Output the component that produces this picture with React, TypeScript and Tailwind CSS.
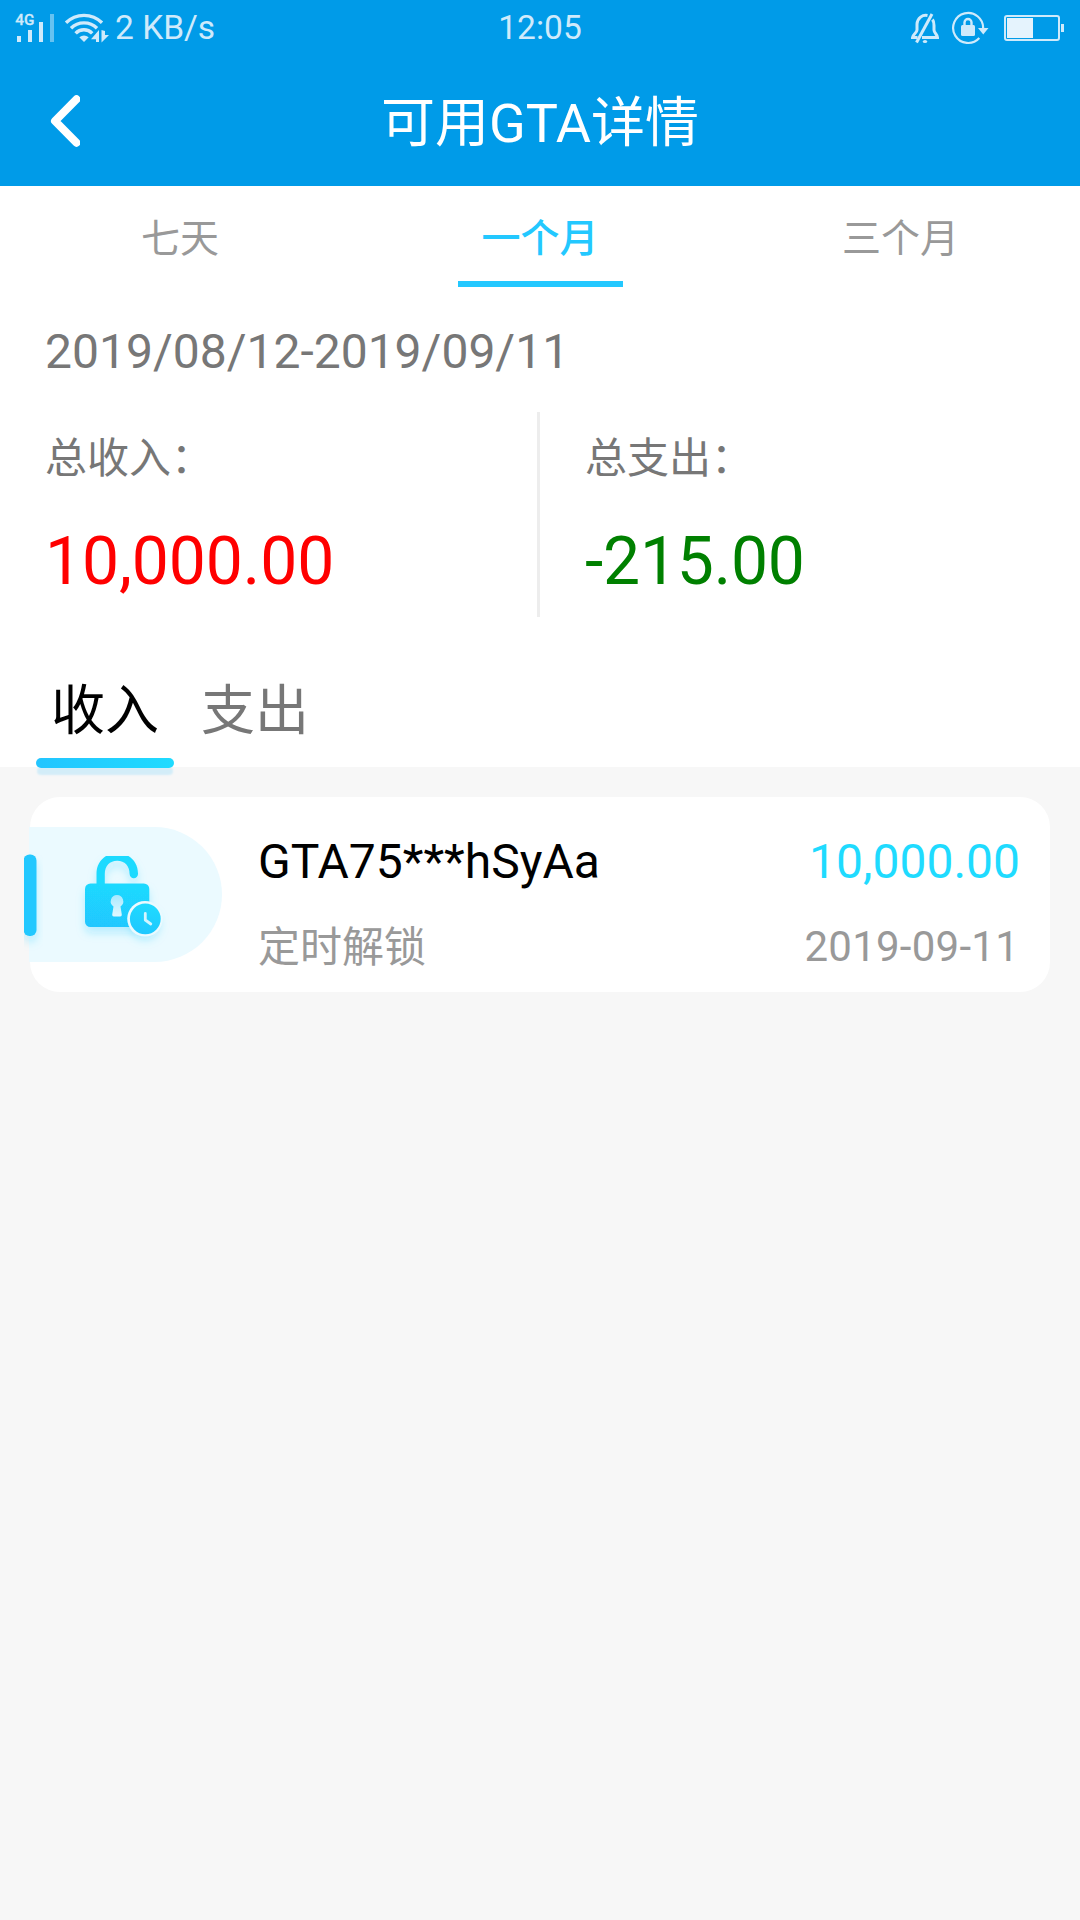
import React from "react";

function SignalIcon() {
  return (
    <svg width="43" height="42" viewBox="15 6 43 42" className="shrink-0">
      <text x="15.300" y="24" fontSize="15.300" fontWeight="500" fill="#cfeafb" stroke="#cfeafb" strokeWidth="0.300" fontFamily="Roboto, sans-serif">4G</text>
      <rect x="17" y="35" width="4" height="6" fill="#cfeafb" />
      <rect x="28" y="29" width="4" height="12" fill="#cfeafb" />
      <rect x="39" y="21" width="4" height="20" fill="#cfeafb" />
      <rect x="50" y="13" width="4" height="28" fill="#66c2f1" />
    </svg>
  );
}

function WifiIcon() {
  return (
    <svg width="46" height="42" viewBox="64 6 46 42" className="shrink-0">
      <g fill="none" stroke="#cfeafb" strokeWidth="3.4">
        <path d="M66 21.8a25.5 25.5 0 0 1 36 0" />
        <path d="M71 27.3a18.2 18.2 0 0 1 26 0" />
        <path d="M75.6 32.4a11.4 11.4 0 0 1 16.6 0" />
      </g>
      <path d="M79.3 36.2q4.7-3.6 9.4 0L84 41z" fill="#cfeafb" />
      <path d="M99 29v12h-3v-2.800h-5zM101.500 29v12.500l7.500-7.500h-4v-4z" fill="#cfeafb" />
    </svg>
  );
}

function MutedBellIcon() {
  return (
    <svg width="30" height="32" viewBox="910 11 30 32" className="shrink-0">
      <g fill="none" stroke="#cfeafb" strokeWidth="3">
        <path d="M927.5 14.5c-5-1-10 2.500-10.500 8.500v6c0 3-4.500 4.500-4.500 7.500h5" />
        <path d="M932.500 18.500c1.300 1.800 1.500 3.500 1.500 6v4.500c0 3 3.500 4.500 3.500 7.500h-15.500" />
        <path d="M932 13l-15.500 28.500" />
      </g>
      <ellipse cx="925" cy="40.500" rx="2.200" ry="1.500" fill="#cfeafb" />
    </svg>
  );
}

function RotationLockIcon() {
  return (
    <svg width="38" height="34" viewBox="951 10 38 34" className="shrink-0">
      <path d="M979.300 37a15 15 0 1 1 3.800-9" fill="none" stroke="#cfeafb" strokeWidth="2.200" />
      <path d="M978 27h10.500l-5.250 6.500z" fill="#cfeafb" />
      <rect x="961" y="24" width="14" height="11" rx="1.500" fill="#cfeafb" />
      <path d="M964.500 25v-3.500a3.500 3.500 0 0 1 7 0v3.500" fill="none" stroke="#cfeafb" strokeWidth="2.400" />
    </svg>
  );
}

function BatteryIcon() {
  return (
    <svg width="61" height="26" viewBox="0 0 61 26" className="shrink-0">
      <rect x="1" y="1" width="54" height="24" rx="2" fill="none" stroke="#cfeafb" strokeWidth="2" />
      <rect x="3" y="3" width="26" height="20" fill="#e5f3fd" />
      <rect x="57" y="9" width="3" height="8" fill="#cfeafb" />
    </svg>
  );
}

function StatusBar() {
  return (
    <div className="grid h-[54px] grid-cols-3 items-center text-[33.500px] leading-[54px] text-[#cfeafb]">
      <div className="flex items-center pl-[15px]">
        <SignalIcon />
        <div className="mr-[5px] ml-[6px] flex"><WifiIcon /></div>
        <span className="pt-px whitespace-nowrap">2 KB/s</span>
      </div>
      <div className="pt-px text-center">12:05</div>
      <div className="flex items-center justify-end pr-[15px]">
        <MutedBellIcon />
        <div className="mr-[15px] ml-[11px] flex"><RotationLockIcon /></div>
        <BatteryIcon />
      </div>
    </div>
  );
}

function UnlockIcon() {
  return (
    <svg width="198" height="135" viewBox="24 827 198 135" className="block">
      <defs>
        <linearGradient id="cyan" x1="0" y1="1" x2="0.2" y2="0">
          <stop offset="0" stopColor="#20c6ff" />
          <stop offset="1" stopColor="#1fd9ff" />
        </linearGradient>
        <linearGradient id="keyhole" x1="0" y1="0" x2="0" y2="1">
          <stop offset="0" stopColor="#a8e9ff" />
          <stop offset="1" stopColor="#e2f8ff" />
        </linearGradient>
        <filter id="glow" x="-50%" y="-50%" width="200%" height="200%">
          <feDropShadow dx="0" dy="6" stdDeviation="4" floodColor="#20c8ff" floodOpacity="0.25" />
        </filter>
      </defs>
      <path d="M29 827h125.500a67.500 67.500 0 0 1 0 135H29z" fill="#ebfaff" />
      <rect x="23.500" y="854.500" width="13" height="81.500" rx="6" fill="#20c8ff" filter="url(#glow)" />
      <g filter="url(#glow)">
        <path d="M96.500 885v-11.500c0-7.500 3.700-14 9.500-17.500h22.500c5.800 3.500 9.500 10 9.500 17.500v0.500a4.200 4.200 0 0 1-8.400 0c0-8-5-13.200-12.400-13.200s-12.400 5.200-12.400 13.200v11z" fill="#1fdaff" />
        <rect x="85" y="883.500" width="64.300" height="43.500" rx="5.500" fill="url(#cyan)" />
      </g>
      <path d="M117 895a6.300 6.300 0 0 1 3.500 11.500l1.300 8q.2 2-1.600 2h-6.400q-1.800 0-1.600-2l1.300-8A6.300 6.300 0 0 1 117 895z" fill="url(#keyhole)" />
      <circle cx="145" cy="918.500" r="15.400" fill="#20c8ff" filter="url(#glow)" />
      <circle cx="145" cy="918.800" r="17.800" fill="#ebfaff" />
      <circle cx="145.300" cy="918.800" r="15.400" fill="url(#cyan)" />
      <path d="M145.300 913.500v6.500l5.500 4" fill="none" stroke="#d3f5ff" strokeWidth="2.800" strokeLinecap="round" strokeLinejoin="round" />
    </svg>
  );
}

function RangeTabs() {
  return (
    <nav className="grid h-[101px] grid-cols-3 text-center text-[39px] text-[#999999]">
      <button className="flex flex-col items-center pt-[25px] leading-[56px]">七天</button>
      <button className="flex flex-col items-center pt-[25px] leading-[56px] font-medium text-[#23c8ff]">
        一个月
        <span className="mt-[14px] h-[6px] w-[165px] bg-[#23c8ff]" />
      </button>
      <button className="flex flex-col items-center pt-[25px] pl-px leading-[56px]">三个月</button>
    </nav>
  );
}

export default function App() {
  return (
    <div
      lang="zh-CN"
      className="h-[1920px] w-[1080px] overflow-hidden bg-[#f7f7f7] font-['Roboto','Noto_Sans_CJK_SC',sans-serif]"
    >
      <header className="h-[186px] bg-[#009be8]">
        <StatusBar />
        <div className="grid h-[132px] grid-cols-3 items-center">
          <svg width="30" height="54" viewBox="0 0 30 54" className="ml-[50px]">
            <path d="M26.500 6.250L5 28l21.500 21.750" fill="none" stroke="#fff" strokeWidth="8" strokeLinecap="round" strokeLinejoin="round" />
          </svg>
          <h1 className="pt-[7px] text-center text-[54px] leading-[72px] whitespace-nowrap text-white">可用GTA详情</h1>
        </div>
      </header>

      <section className="h-[581px] bg-white">
        <RangeTabs />
        <div className="pt-[37px] pl-[45px] text-[48px] leading-[56px] text-[#777777]">2019/08/12-2019/09/11</div>
        <div className="mt-8 flex h-[205px]">
          <div className="w-[540px] border-r-[3px] border-[#ededed] pt-[19px] pl-[45px]">
            <div className="text-[42px] leading-[56px] text-[#777777]">总收入：</div>
            <div className="mt-[35px] text-[66px] leading-[80px] tracking-[-0.1px] text-[#ff0000]">10,000.00</div>
          </div>
          <div className="pt-[19px] pl-[45px]">
            <div className="text-[42px] leading-[56px] text-[#777777]">总支出：</div>
            <div className="mt-[35px] text-[66px] leading-[80px] tracking-[-0.2px] text-[#008000]">-215.00</div>
          </div>
        </div>
        <div className="flex h-[150px] pt-[59px] pl-[36px] text-[54px] leading-[72px]">
          <button className="flex w-[138px] flex-col items-center text-black">
            收入
            <span className="mt-[10px] h-[10px] w-[138px] shrink-0 rounded-full bg-linear-to-r from-[#23c5ff] to-[#1fdbff] shadow-[0_8px_2px_-1px_#d3edf8]" />
          </button>
          <button className="ml-[27px] flex text-[#777777]">支出</button>
        </div>
      </section>

      <article className="mx-[30px] mt-[30px] flex h-[195px] rounded-[30px] bg-white">
        <div className="-ml-[6px] pt-[30px]"><UnlockIcon /></div>
        <div className="ml-9 flex flex-1 justify-between pr-[30px]">
          <div className="pt-[37px]">
            <div className="text-[48px] leading-[56px] text-black">GTA75***hSyAa</div>
            <div className="mt-7 text-[42px] leading-[60px] text-[#999999]">定时解锁</div>
          </div>
          <div className="pt-[37px] text-right">
            <div className="text-[48px] leading-[56px] text-[#1fdbff]">10,000.00</div>
            <div className="mt-[27px] pr-px text-[42px] leading-[60px] tracking-[0.25px] text-[#999999]">2019-09-11</div>
          </div>
        </div>
      </article>
    </div>
  );
}
